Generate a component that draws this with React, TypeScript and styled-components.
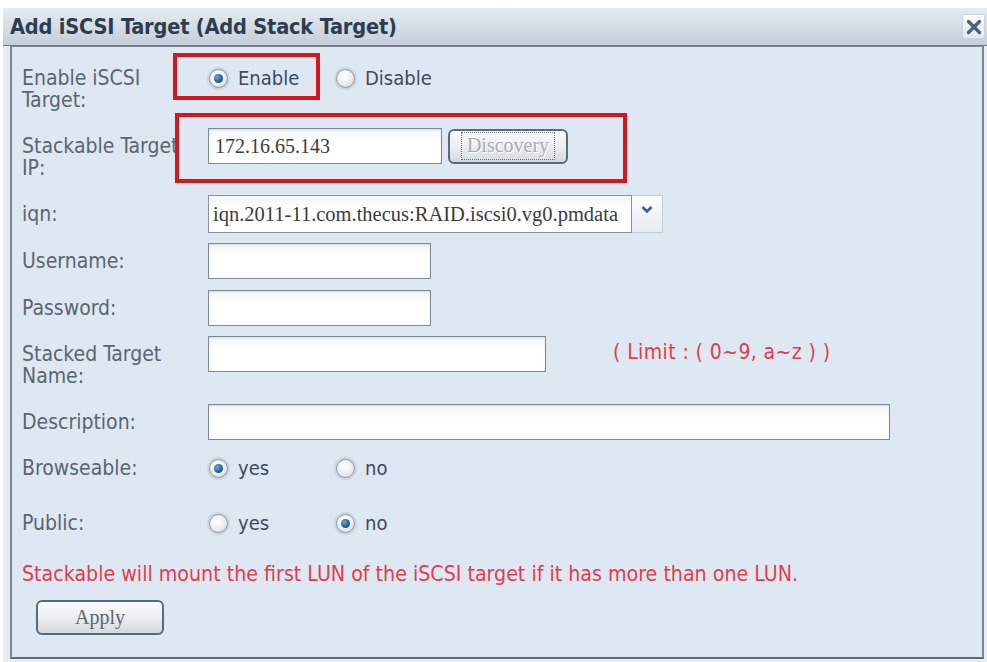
import React from "react";
import styled, { createGlobalStyle } from "styled-components";

const GlobalStyle = createGlobalStyle`
  html, body {
    margin: 0;
    padding: 0;
    background: #ffffff;
  }
  body {
    font-family: "DejaVu Sans Condensed", "DejaVu Sans", Verdana, sans-serif;
  }
`;

const Window = styled.div`
  margin: 8px 0 0 3px;
  width: 984px;
  height: 654px;
  background: #e8edf3;
  display: flex;
  flex-direction: column;
`;

const TitleBar = styled.div`
  height: 37px;
  display: flex;
  align-items: center;
  padding: 0 2px 0 7px;
  background: linear-gradient(#e6ebf1, #c4cfdb);
  border-bottom: 1px solid #6c7989;
`;

const Title = styled.div`
  font-weight: bold;
  font-size: 21.6px;
  color: #2c3d4f;
  letter-spacing: -0.2px;
`;

const CloseButton = styled.button`
  margin-left: auto;
  width: 23px;
  height: 25px;
  padding: 0;
  border: 1px solid #c9d3de;
  border-radius: 2px;
  background: linear-gradient(#fbfcfd, #e4e9ef);
  display: flex;
  align-items: center;
  justify-content: center;
`;

const Panel = styled.div`
  flex: 1;
  margin: 0 3px 3px 7px;
  border: 2px solid #7b8693;
  border-top: 1px solid #7b8693;
  border-bottom-color: #5f6a77;
  background: #dee8f3;
  padding: 13px 0 0 10px;
`;

const Row = styled.div<{ $h: number }>`
  position: relative;
  display: grid;
  grid-template-columns: 186px auto;
  align-items: start;
  height: ${(p) => p.$h}px;
`;

const Label = styled.div`
  font-size: 21px;
  line-height: 22px;
  padding-top: 7px;
  color: #5c656f;
  white-space: nowrap;
`;

const Controls = styled.div`
  display: flex;
  align-items: center;
  height: 36px;
`;

const Option = styled.label`
  width: 128px;
  display: flex;
  align-items: center;
  gap: 8px;
  margin-left: -1px;
  font-size: 20px;
  color: #3e4b5a;
`;

const Radio = styled.span<{ $on?: boolean }>`
  width: 19px;
  height: 19px;
  box-sizing: border-box;
  border-radius: 50%;
  border: 1px solid #8c97a3;
  background: radial-gradient(circle at 40% 35%, #ffffff 0%, #e9edf1 55%, #c8d0d8 100%);
  box-shadow: 0 0 0 2px rgba(180, 192, 205, 0.45);
  display: flex;
  align-items: center;
  justify-content: center;
  margin: 0 2px;

  &::after {
    content: "";
    display: ${(p) => (p.$on ? "block" : "none")};
    width: 9px;
    height: 9px;
    border-radius: 50%;
    background: radial-gradient(circle at 35% 35%, #6fa6d2 0%, #1f5e8f 60%, #163f63 100%);
  }
`;

const TextInput = styled.input<{ $w: number }>`
  width: ${(p) => p.$w}px;
  height: 36px;
  box-sizing: border-box;
  border: 1px solid #7f8a96;
  box-shadow: inset 0 1px 2px rgba(0, 0, 0, 0.12);
  background: linear-gradient(#f3f5f7, #ffffff 40%);
  font-family: "Liberation Serif", "Times New Roman", serif;
  font-size: 20px;
  color: #3b3b3b;
  padding: 0 6px;
  outline: none;
`;

const SmallButton = styled.button<{ $w: number }>`
  width: ${(p) => p.$w}px;
  height: 35px;
  border: 2px solid #566b81;
  border-radius: 6px;
  background: linear-gradient(#fbfbfc, #eceef1 50%, #d5d9de);
  font-family: "Liberation Serif", "Times New Roman", serif;
  font-size: 20px;
  padding: 0;
  display: flex;
  align-items: center;
  justify-content: center;
`;

const DiscoveryLabel = styled.span`
  border: 1px dotted #6e747a;
  padding: 1px 5px 2px;
  color: #a6adb4;
  text-shadow: 1px 1px 0 #ffffff;
`;

const ApplyLabel = styled.span`
  color: #5e646b;
`;

const SelectBox = styled.div`
  display: flex;
  height: 38px;
  margin-top: -1px;
`;

const SelectValue = styled.div`
  width: 424px;
  box-sizing: border-box;
  border: 1px solid #8a949f;
  background: linear-gradient(#f5f6f8, #ffffff 40%);
  font-family: "Liberation Serif", "Times New Roman", serif;
  font-size: 20.5px;
  color: #3b3b3b;
  display: flex;
  align-items: center;
  padding-left: 4px;
  white-space: nowrap;
  overflow: hidden;
`;

const SelectArrow = styled.div`
  width: 31px;
  box-sizing: border-box;
  border: 1px solid #c5ced8;
  border-left: none;
  background: linear-gradient(#fbfcfd, #e6ebf0);
  display: flex;
  align-items: flex-start;
  justify-content: center;
  padding-top: 9px;
`;

const Hint = styled.span`
  margin-left: 67px;
  font-size: 21px;
  letter-spacing: 0.4px;
  color: #e23d4d;
  margin-top: -4px;
`;

const Note = styled.div`
  font-size: 21.2px;
  line-height: 22px;
  color: #e23d4d;
  white-space: nowrap;
`;

const ApplyRow = styled.div`
  margin: 15px 0 0 14px;
`;

const Mark = styled.div<{ $l: number; $t: number; $w: number; $hh: number }>`
  position: absolute;
  left: ${(p) => p.$l}px;
  top: ${(p) => p.$t}px;
  width: ${(p) => p.$w}px;
  height: ${(p) => p.$hh}px;
  box-sizing: border-box;
  border: 4px solid #d4161f;
  pointer-events: none;
`;

const CloseIcon = () => (
  <svg width="16" height="16" viewBox="0 0 16 16">
    <path d="M2.5 2.5 L13.5 13.5 M13.5 2.5 L2.5 13.5" stroke="#4b6282" strokeWidth="3.4" strokeLinecap="round" />
  </svg>
);

const Chevron = () => (
  <svg width="12" height="9" viewBox="0 0 12 9">
    <path d="M1.5 2 L6 6.5 L10.5 2" stroke="#3a5e92" strokeWidth="2.6" fill="none" />
  </svg>
);

export default function App() {
  return (
    <>
      <GlobalStyle />
      <Window>
        <TitleBar>
          <Title>Add iSCSI Target (Add Stack Target)</Title>
          <CloseButton>
            <CloseIcon />
          </CloseButton>
        </TitleBar>
        <Panel>
          <Row $h={68}>
            <Label>
              Enable iSCSI
              <br />
              Target:
            </Label>
            <Controls>
              <Option>
                <Radio $on />
                Enable
              </Option>
              <Option>
                <Radio />
                Disable
              </Option>
            </Controls>
            <Mark $l={151} $t={-7} $w={147} $hh={47} />
          </Row>
          <Row $h={68}>
            <Label>
              Stackable Target
              <br />
              IP:
            </Label>
            <Controls>
              <TextInput $w={234} defaultValue="172.16.65.143" />
              <SmallButton $w={120} style={{ marginLeft: 6 }}>
                <DiscoveryLabel>Discovery</DiscoveryLabel>
              </SmallButton>
            </Controls>
            <Mark $l={153} $t={-15} $w={452} $hh={70} />
          </Row>
          <Row $h={47}>
            <Label>iqn:</Label>
            <SelectBox>
              <SelectValue>iqn.2011-11.com.thecus:RAID.iscsi0.vg0.pmdata</SelectValue>
              <SelectArrow>
                <Chevron />
              </SelectArrow>
            </SelectBox>
          </Row>
          <Row $h={47}>
            <Label>Username:</Label>
            <Controls>
              <TextInput $w={223} />
            </Controls>
          </Row>
          <Row $h={46}>
            <Label>Password:</Label>
            <Controls>
              <TextInput $w={223} type="password" />
            </Controls>
          </Row>
          <Row $h={68}>
            <Label>
              Stacked Target
              <br />
              Name:
            </Label>
            <Controls>
              <TextInput $w={338} />
              <Hint>( Limit : ( 0~9, a~z ) )</Hint>
            </Controls>
          </Row>
          <Row $h={46}>
            <Label>Description:</Label>
            <Controls>
              <TextInput $w={682} />
            </Controls>
          </Row>
          <Row $h={55}>
            <Label>Browseable:</Label>
            <Controls>
              <Option>
                <Radio $on />
                yes
              </Option>
              <Option>
                <Radio />
                no
              </Option>
            </Controls>
          </Row>
          <Row $h={58}>
            <Label>Public:</Label>
            <Controls>
              <Option>
                <Radio />
                yes
              </Option>
              <Option>
                <Radio $on />
                no
              </Option>
            </Controls>
          </Row>
          <Note>Stackable will mount the first LUN of the iSCSI target if it has more than one LUN.</Note>
          <ApplyRow>
            <SmallButton $w={128}>
              <ApplyLabel>Apply</ApplyLabel>
            </SmallButton>
          </ApplyRow>
        </Panel>
      </Window>
    </>
  );
}
